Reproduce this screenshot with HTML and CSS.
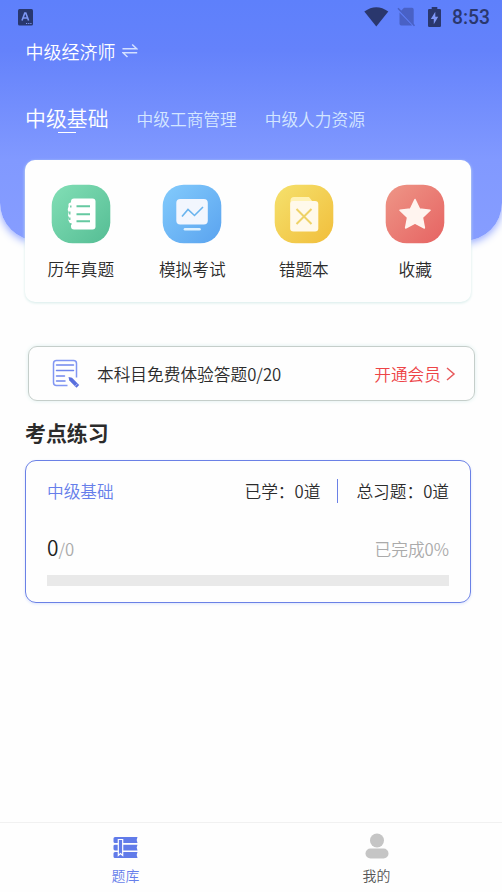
FILE: index.html
```html
<!DOCTYPE html>
<html lang="zh-CN">
<head>
<meta charset="utf-8">
<title>题库</title>
<link rel="stylesheet" href="styles.css">
</head>
<body>
<div class="app">
  <header class="hero">
    <div class="status">
      <svg class="status-app" width="15" height="17" viewBox="0 0 15 17"><rect width="15" height="16.500" rx="1.500" fill="#28376f"/><path d="M4 11.500 6.800 4h1L10.600 11.500M5 9h4.600" fill="none" stroke="#7e97f5" stroke-width="1.600"/><path d="M8 14.500h1.200M10.200 14.500h1.200M12.300 14.500h1.200" stroke="#7e97f5"/></svg>
      <svg class="status-wifi" width="25" height="20" viewBox="0 0 25 20"><path d="M.3 4.500Q12.300-4 24.300 4.500L12.300 19.500Z" fill="#2a376d"/></svg>
      <svg class="status-sim" width="19" height="20" viewBox="0 0 19 20"><path d="M7 .8h8q1.700 0 1.700 1.700v14.700L4.700 5 3.900 4.100ZM2.500 5.500 15.300 18.500H4.200q-1.700 0-1.700-1.700Z" fill="#4961c5"/><path d="m1 1.200 16.500 17.500" stroke="#4961c5" stroke-width="1.500"/></svg>
      <svg class="status-battery" width="13" height="20" viewBox="0 0 13 20"><path d="M0 3.200Q0 2 1.200 2H3.700V0h5.600v2h2.500Q13 2 13 3.200v15.600q0 1.200-1.200 1.200H1.200Q0 20 0 18.800Z" fill="#2a376d"/><path d="M7.300 4.800 2.800 12h3v5.200L10.200 9.700H7.300Z" fill="#7f97f8"/></svg>
      <span class="clock">8:53</span>
    </div>
    <div class="subject">
      <span>中级经济师</span>
      <svg width="16" height="16" viewBox="0 0 16 16" fill="none" stroke="#d3e0ff" stroke-width="1.500"><path d="M.5 5.700h14.200L10.200 1.500M15.200 9.700H1L5.500 14"/></svg>
    </div>
    <nav class="tabs">
      <a class="tab tab-active">中级基础</a>
      <a class="tab">中级工商管理</a>
      <a class="tab">中级人力资源</a>
    </nav>
  </header>

  <section class="shortcuts">
    <a class="shortcut">
      <svg width="60" height="60" viewBox="0 0 60 60"><defs><linearGradient id="green" x2="1" y2="1"><stop stop-color="#82dfb6"/><stop offset="1" stop-color="#55bd94"/></linearGradient></defs><rect x=".7" y=".7" width="58.600" height="58.600" rx="21" fill="url(#green)"/><rect x="20" y="14.500" width="24.500" height="31" rx="3" fill="#fff"/><path d="M22 18.500h-2.500q-2.500.5-2 3 .3 1.500-.5 2.500-.8 2 .5 3.500.5 1-.2 2-.8 2 .5 3.500.5 1-.2 2-.6 2 .8 3 .3 2.500 2.600 2.500h1Z" fill="#fff"/><path d="M19.800 21.500v2M18.800 27.500v3M18.800 33.500v2.500M19.800 39v2" stroke="#62c79e" stroke-width="1.300"/><path d="M25.500 22.300H39M25.500 30.300H39M25.500 37.300H39" stroke="#65c9a1" stroke-width="2"/></svg>
      <span>历年真题</span>
    </a>
    <a class="shortcut">
      <svg width="60" height="60" viewBox="0 0 60 60"><defs><linearGradient id="blue" x2="1" y2="1"><stop stop-color="#83cbfc"/><stop offset="1" stop-color="#5aa3ef"/></linearGradient></defs><rect x=".7" y=".7" width="58.600" height="58.600" rx="21" fill="url(#blue)"/><rect x="14.300" y="15" width="31.500" height="25.500" rx="4" fill="#f2f6fe"/><path d="m20 32.500 6-7 6.500 6 8.500-8.500" fill="none" stroke="#69b4ee" stroke-width="1.600"/><path d="M23 45.300h14.500" stroke="#def1ff" stroke-width="2.600" stroke-linecap="round"/></svg>
      <span>模拟考试</span>
    </a>
    <a class="shortcut">
      <svg width="60" height="60" viewBox="0 0 60 60"><defs><linearGradient id="yellow" x2="1" y2="1"><stop stop-color="#f5e16d"/><stop offset="1" stop-color="#f1be3b"/></linearGradient></defs><rect x=".7" y=".7" width="58.600" height="58.600" rx="21" fill="url(#yellow)"/><path d="M20 13h15l3.500 4.500v10H16.500v-11Q16.500 13 20 13Z" fill="#fff2b5"/><path d="M19 17h22q3.300 0 3.300 3.300v24q0 3.300-3.300 3.300H19.500q-3.300 0-3.300-3.300V20Q16.200 17 19 17Z" fill="#fff9eb"/><path d="m22.500 25 15 15m0-15-15 15" stroke="#eed267" stroke-width="2"/></svg>
      <span>错题本</span>
    </a>
    <a class="shortcut">
      <svg width="60" height="60" viewBox="0 0 60 60"><defs><linearGradient id="red" x2="1" y2="1"><stop stop-color="#ee9687"/><stop offset="1" stop-color="#e66362"/></linearGradient></defs><rect x=".7" y=".7" width="58.600" height="58.600" rx="21" fill="url(#red)"/><path d="m30 15.500 4.600 9.500 10.400 1.300-7.600 7.200 2 10.500-9.400-4.800-9.400 4.800 2-10.500-7.600-7.200L25.400 25Z" fill="#fff4ef" stroke="#fff4ef" stroke-width="1.500" stroke-linejoin="round"/></svg>
      <span>收藏</span>
    </a>
  </section>

  <section class="trial">
    <svg class="trial-icon" width="28" height="30" viewBox="0 0 28 30" fill="none"><path d="M15.500 26.500H4.500Q1.500 26.500 1.500 23.500V4.500Q1.500 1.500 4.500 1.500h17q3 0 3 3v14" stroke="#8196f3" stroke-width="1.500"/><path d="M4.500 6h17M4.500 11.500h17M4.500 17h8M4.500 22h8.500" stroke="#7087ed" stroke-width="1.500" stroke-linecap="round"/><path d="m16.500 18 .8 3.500 7.200 7.200 2.700-2.700-7.200-7.200Z" fill="#596fdd"/><path d="m23 27.200 2.700-2.700" stroke="#b9c3fb" stroke-width=".8"/></svg>
    <span>本科目免费体验答题0/20</span>
    <a class="vip">开通会员<svg width="10" height="14" viewBox="0 0 10 14"><path d="m1 1 7 6-7 6" fill="none" stroke="#e7595b" stroke-width="1.500"/></svg></a>
  </section>

  <h2 class="heading">考点练习</h2>

  <section class="practice">
    <div class="practice-top">
      <span class="practice-name">中级基础</span>
      <span class="learned">已学：0道</span>
      <span class="total">总习题：0道</span>
    </div>
    <div class="practice-mid">
      <span><b class="count">0</b>/0</span>
      <span>已完成0%</span>
    </div>
    <div class="bar"></div>
  </section>

  <nav class="bottom-nav">
    <a class="nav-item nav-active">
      <svg width="26" height="22" viewBox="0 0 26 22"><g fill="#617be9"><path d="M2 0h22.500l-.8 3 .8 3H2Q.5 6 .5 4.500v-3Q.5 0 2 0ZM2 7.700h22.500l-.8 2.800.8 2.900H2Q.5 13.400.5 12V9Q.5 7.700 2 7.700ZM2 15h22.500l-.8 3 .8 3H2Q.5 21 .5 19.500v-3Q.5 15 2 15Z"/><path d="M5.300 2.500h4.400v16l-2.200-2-2.200 2Z" stroke="#fff" stroke-width="1.200"/></g></svg>
      <span>题库</span>
    </a>
    <a class="nav-item">
      <svg width="26" height="26" viewBox="0 0 26 26" fill="#c5c5c5"><circle cx="13" cy="7.500" r="7"/><rect x="1.500" y="15.500" width="23" height="10" rx="5"/></svg>
      <span>我的</span>
    </a>
  </nav>
</div>
</body>
</html>
```
FILE: styles.css
```css
* {
  box-sizing: border-box;
}

body {
  margin: 0;
  background: #fefefe;
  color: #2b2b2b;
  font-family: "Noto Sans CJK SC", sans-serif;
  font-size: 16.7px;
  font-weight: 350;
}

svg {
  display: block;
  flex: none;
}

.app {
  display: flex;
  flex-direction: column;
  height: 892px;
  overflow: hidden;
}

.hero {
  flex: none;
  height: 241px;
  border-radius: 0 0 38px 38px;
  background: linear-gradient(#5e80fb 0, #6482fb 50px, #8199ff 160px, #869dff 241px);
  box-shadow: 0 2px 8px #8ea3ff;
  color: #fff;
}

.status {
  display: flex;
  align-items: center;
  height: 34px;
  padding: 0 12px 0 18px;
}

.status-wifi {
  margin-left: auto;
}

.status-sim {
  margin-left: 8px;
}

.status-battery {
  margin-left: 12px;
}

.clock {
  margin-left: 11px;
  padding-top: 2px;
  color: #2a376d;
  font: 500 19.3px/34px Roboto, sans-serif;
}

.subject {
  display: flex;
  align-items: center;
  gap: 6px;
  height: 34px;
  padding-left: 25.500px;
  font-size: 18px;
}

.tabs {
  display: flex;
  align-items: center;
  gap: 28px;
  height: 30px;
  margin-top: 35px;
  padding-left: 25px;
}

.tab {
  padding-top: 1px;
  color: #d4e6ff;
  line-height: 30px;
}

.tab-active {
  position: relative;
  padding: 0 0 2px;
  color: #fff;
  font-size: 20.9px;
}

.tab-active::after {
  content: "";
  position: absolute;
  bottom: 1px;
  left: 33px;
  width: 18px;
  height: 1.500px;
  background: #fff;
}

.shortcuts {
  position: relative;
  display: grid;
  grid-template-columns: repeat(4, 1fr);
  flex: none;
  height: 142px;
  margin: -81px 31px 0 25px;
  padding-top: 24px;
  border-radius: 10px;
  background: #fefefe;
  box-shadow: 0 1px 3px #d5ebe9;
}

.shortcut {
  display: flex;
  flex-direction: column;
  align-items: center;
  gap: 12px;
  line-height: 26px;
}

.trial {
  display: flex;
  align-items: center;
  flex: none;
  height: 55px;
  margin: 44px 27px 0 28px;
  padding: 0 18px 0 23px;
  border: 1.500px solid #c5ceca;
  border-radius: 9px;
  box-shadow: 0 0 4px #dcefed;
}

.trial-icon {
  margin-right: 17px;
}

.vip {
  display: flex;
  align-items: center;
  gap: 5px;
  margin-left: auto;
  color: #ed4447;
}

.heading {
  margin: 16px 0 0 25px;
  font-size: 20.9px;
  font-weight: 700;
  line-height: 30px;
}

.practice {
  flex: none;
  height: 143px;
  margin: 13px 31px 0 25px;
  padding: 17px 21px 0;
  border: 1.500px solid #6b81e6;
  border-radius: 11px;
  box-shadow: 0 1px 3px #dce5fd;
}

.practice-top {
  display: flex;
  align-items: center;
  height: 26px;
}

.practice-name {
  margin-right: auto;
  color: #667eea;
}

.total {
  margin-left: 17px;
  padding-left: 18px;
  border-left: 1px solid #6b81e6;
}

.practice-mid {
  display: flex;
  align-items: baseline;
  justify-content: space-between;
  height: 34px;
  margin-top: 26px;
  color: #aaa;
  line-height: 34px;
}

.count {
  color: #222;
  font-size: 20.9px;
  font-weight: 350;
}

.bar {
  height: 11px;
  margin-top: 11px;
  background: #e9e9e9;
}

.bottom-nav {
  display: grid;
  grid-template-columns: 1fr 1fr;
  flex: none;
  height: 70px;
  margin-top: auto;
  border-top: 1px solid #f1f1f1;
  font-size: 13.9px;
}

.nav-item {
  display: flex;
  flex-direction: column;
  align-items: center;
  justify-content: flex-end;
  gap: 6px;
  padding-bottom: 7px;
  color: #555;
  line-height: 20px;
}

.nav-active {
  color: #667eea;
}
```
